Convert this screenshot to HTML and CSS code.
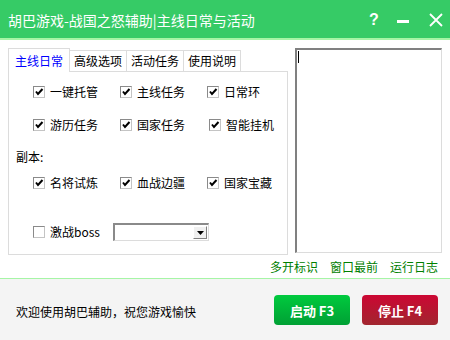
FILE: index.html
```html
<!DOCTYPE html>
<html lang="zh">
<head>
<meta charset="utf-8">
<title>胡巴游戏-战国之怒辅助</title>
<link rel="stylesheet" href="styles.css">
</head>
<body>
<div class="window">
  <header class="titlebar">
    <span class="title">胡巴游戏-战国之怒辅助|主线日常与活动</span>
    <div class="controls">
      <span class="help">?</span>
      <svg class="min" width="12" height="3" viewBox="0 0 12 3"><rect x="0" y="0" width="12" height="3" fill="#fff"/></svg>
      <svg class="close" width="14" height="14" viewBox="0 0 14 14"><path d="M1 1 L13 13 M13 1 L1 13" stroke="#fff" stroke-width="1.8" fill="none"/></svg>
    </div>
  </header>
  <main class="main">
    <div class="content">
      <section class="tabs">
        <div class="tabbar">
          <span class="tab active">主线日常</span>
          <span class="tab">高级选项</span>
          <span class="tab">活动任务</span>
          <span class="tab">使用说明</span>
        </div>
        <div class="panel">
          <div class="row r1">
            <label class="cb"><span class="box"><svg viewBox="0 0 10 10"><path d="M2 4.5 L4 7 L8.5 2" stroke="#000" stroke-width="2" fill="none"/></svg></span>一键托管</label>
            <label class="cb"><span class="box"><svg viewBox="0 0 10 10"><path d="M2 4.5 L4 7 L8.5 2" stroke="#000" stroke-width="2" fill="none"/></svg></span>主线任务</label>
            <label class="cb"><span class="box"><svg viewBox="0 0 10 10"><path d="M2 4.5 L4 7 L8.5 2" stroke="#000" stroke-width="2" fill="none"/></svg></span>日常环</label>
          </div>
          <div class="row r2">
            <label class="cb"><span class="box"><svg viewBox="0 0 10 10"><path d="M2 4.5 L4 7 L8.5 2" stroke="#000" stroke-width="2" fill="none"/></svg></span>游历任务</label>
            <label class="cb"><span class="box"><svg viewBox="0 0 10 10"><path d="M2 4.5 L4 7 L8.5 2" stroke="#000" stroke-width="2" fill="none"/></svg></span>国家任务</label>
            <label class="cb shift"><span class="box"><svg viewBox="0 0 10 10"><path d="M2 4.5 L4 7 L8.5 2" stroke="#000" stroke-width="2" fill="none"/></svg></span>智能挂机</label>
          </div>
          <div class="section-label">副本:</div>
          <div class="row r3">
            <label class="cb"><span class="box"><svg viewBox="0 0 10 10"><path d="M2 4.5 L4 7 L8.5 2" stroke="#000" stroke-width="2" fill="none"/></svg></span>名将试炼</label>
            <label class="cb"><span class="box"><svg viewBox="0 0 10 10"><path d="M2 4.5 L4 7 L8.5 2" stroke="#000" stroke-width="2" fill="none"/></svg></span>血战边疆</label>
            <label class="cb"><span class="box"><svg viewBox="0 0 10 10"><path d="M2 4.5 L4 7 L8.5 2" stroke="#000" stroke-width="2" fill="none"/></svg></span>国家宝藏</label>
          </div>
          <div class="boss-row">
            <label class="cb"><span class="box"></span>激战boss</label>
            <div class="select">
              <span class="arrow"><svg width="7" height="4" viewBox="0 0 7 4"><path d="M0 0 H7 L3.5 4 Z" fill="#000"/></svg></span>
            </div>
          </div>
        </div>
      </section>
      <div class="log"><span class="caret"></span></div>
    </div>
    <nav class="links">
      <a>多开标识</a>
      <a>窗口最前</a>
      <a>运行日志</a>
    </nav>
  </main>
  <footer class="footer">
    <span class="welcome">欢迎使用胡巴辅助，祝您游戏愉快</span>
    <div class="buttons">
      <button class="btn start">启动 F3</button>
      <button class="btn stop">停止 F4</button>
    </div>
  </footer>
</div>
</body>
</html>
```

FILE: styles.css
```css
* { box-sizing: border-box; }
html, body {
  margin: 0;
  padding: 0;
  width: 450px;
  height: 340px;
  overflow: hidden;
  background: #fff;
  font-family: "Noto Sans CJK SC", "Liberation Sans", sans-serif;
  font-size: 12px;
  color: #000;
}
.window {
  width: 450px;
  height: 340px;
  display: flex;
  flex-direction: column;
}
.titlebar {
  height: 40px;
  flex: none;
  background: #36cb66;
  border-bottom: 2px solid #a6f5a6;
  display: flex;
  align-items: center;
  justify-content: space-between;
  padding: 0 7px 0 8px;
}
.title {
  color: #fff;
  font-size: 14px;
  line-height: 16px;
  margin-top: 2px;
}
.controls {
  display: flex;
  align-items: center;
  gap: 20px;
  margin-top: 2px;
}
.help {
  color: #fff;
  font-family: "Liberation Sans", sans-serif;
  font-size: 16px;
  font-weight: bold;
  line-height: 16px;
  width: 8px;
}
.min { display: block; margin-top: 3px; }
.close { display: block; }

.main {
  height: 239px;
  flex: none;
  border-bottom: 1px solid #a6f5a6;
  padding-top: 8px;
  display: flex;
  flex-direction: column;
}
.content {
  display: flex;
  height: 207px;
  padding-left: 8px;
}
.tabs {
  width: 280px;
  display: flex;
  flex-direction: column;
}
.tabbar {
  height: 23px;
  display: flex;
  align-items: flex-end;
  position: relative;
  z-index: 1;
}
.tab {
  height: 21px;
  padding: 0 4px;
  border: 1px solid #dcdcdc;
  border-bottom: none;
  line-height: 19px;
  background: #fff;
  white-space: nowrap;
  margin-right: -1px;
}
.tab.active {
  height: 24px;
  margin-bottom: -1px;
  padding: 0 6px;
  color: #0000ff;
  line-height: 24px;
}
.panel {
  height: 184px;
  border: 1px solid #dcdcdc;
  padding: 10px 0 0 24px;
}
.row {
  display: grid;
  grid-template-columns: 87px 87px 87px;
  height: 20px;
  align-items: center;
}
.r2 { margin-top: 13px; }
.r3 { margin-top: 6px; }
.section-label {
  height: 20px;
  line-height: 20px;
  margin: 12px 0 0 -17px;
}
.cb {
  display: flex;
  align-items: center;
  gap: 5px;
  white-space: nowrap;
  line-height: 20px;
}
.cb.shift { margin-left: 2px; }
.box {
  width: 12px;
  height: 12px;
  flex: none;
  border: 1px solid #8a8a8a;
  border-right-color: #c4c4c4;
  border-bottom-color: #c4c4c4;
  background: #fff;
  display: flex;
  align-items: center;
  justify-content: center;
}
.box svg { width: 10px; height: 10px; display: block; }
.boss-row {
  margin-top: 29px;
  height: 20px;
  display: flex;
  align-items: center;
}
.boss-row .cb { width: 80px; }
.select {
  width: 96px;
  height: 18px;
  border: 2px solid #8a8a8a;
  border-right: 1px solid #dcdcdc;
  border-bottom: 1px solid #dcdcdc;
  background: #fff;
  display: flex;
  justify-content: flex-end;
  align-items: stretch;
  padding: 1px;
}
.arrow {
  width: 14px;
  background: #f0f0f0;
  border: 1px solid #fff;
  border-right-color: #808080;
  border-bottom-color: #808080;
  display: flex;
  align-items: center;
  justify-content: center;
}
.arrow svg { display: block; }
.log {
  margin-left: 7px;
  width: 147px;
  height: 205px;
  border: 2px solid #808080;
  border-right: 1px solid #dcdcdc;
  border-bottom: 1px solid #dcdcdc;
  background: #fff;
  padding: 1px 0 0 1px;
}
.caret {
  display: block;
  width: 1px;
  height: 12px;
  background: #000;
}
.links {
  height: 23px;
  display: flex;
  justify-content: flex-end;
  align-items: center;
  gap: 12px;
  padding-right: 12px;
}
.links a {
  color: #008000;
  font-size: 12px;
  text-decoration: none;
  cursor: pointer;
}
.footer {
  flex: 1;
  background: #f4f4f4;
  display: flex;
  align-items: center;
  justify-content: space-between;
  padding: 0 12px 0 16px;
}
.welcome {
  font-size: 12px;
  margin-top: 3px;
}
.buttons {
  display: flex;
  gap: 12px;
  margin-top: 1px;
}
.btn {
  width: 76px;
  height: 30px;
  border: none;
  border-radius: 4px;
  color: #fff;
  font-family: "Noto Sans CJK SC", "Liberation Sans", sans-serif;
  font-size: 13px;
  font-weight: bold;
  padding: 0;
}
.btn.start { background: linear-gradient(#00ca3e, #00a034); }
.btn.stop { background: linear-gradient(#cc0733, #a1262f); }
```
